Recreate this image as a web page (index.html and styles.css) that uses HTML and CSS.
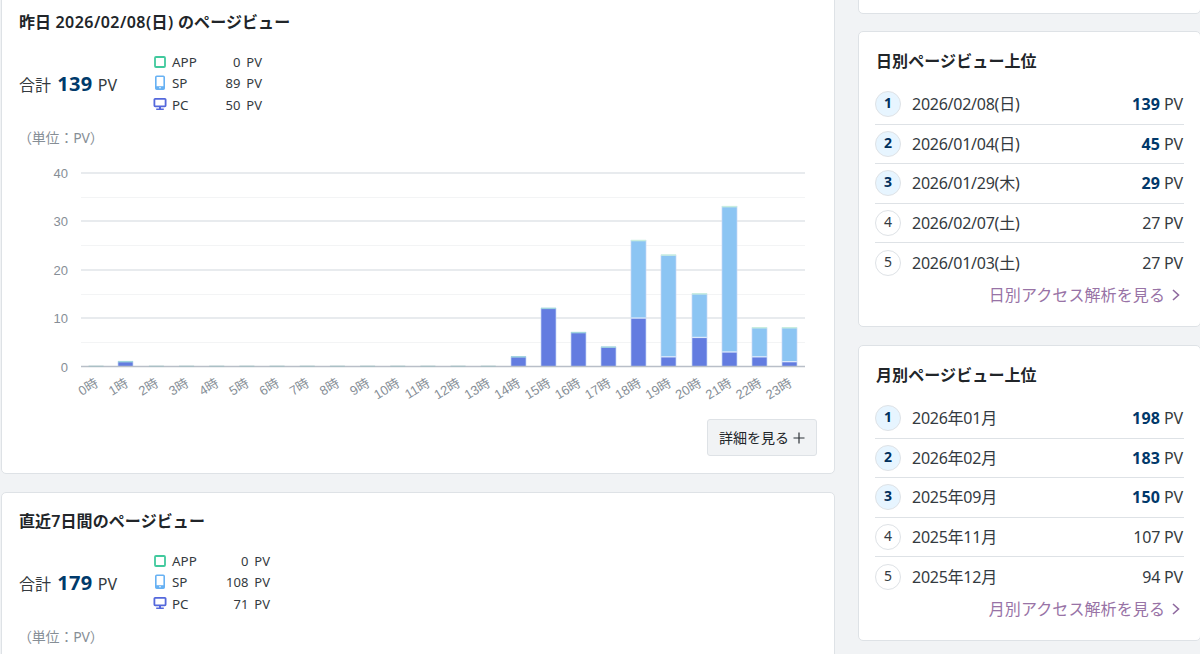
FILE: index.html
```html
<!DOCTYPE html>
<html lang="ja">
<head>
    <meta charset="UTF-8">
    <meta name="viewport" content="width=device-width, initial-scale=1.0">
    <title>アクセス解析</title>
    <link rel="stylesheet" href="styles.css">
</head>
<body>
    <!-- Device icons -->
    <svg class="icon-defs" width="0" height="0">
        <symbol id="icon-app" viewBox="0 0 14 16">
            <rect x="2" y="3" width="10" height="10" rx="1" fill="none" stroke="#41c99d" stroke-width="1.8"/>
        </symbol>
        <symbol id="icon-sp" viewBox="0 0 14 16">
            <rect x="2.8" y="1.3" width="8.4" height="13" rx="1" fill="none" stroke="#67b1f3" stroke-width="1.6"/>
            <path d="M2.8 11.2h8.4v3H2.8z" fill="#67b1f3"/>
            <circle cx="7" cy="12.7" r="0.8" fill="#fff"/>
        </symbol>
        <symbol id="icon-pc" viewBox="0 0 14 16">
            <rect x="1.4" y="2.8" width="11.2" height="7.6" rx="0.8" fill="none" stroke="#5468dc" stroke-width="1.8"/>
            <path d="M6 10.5h2v2h2.8v1.6h-7.6v-1.6H6z" fill="#5468dc"/>
        </symbol>
    </svg>

    <div class="page">
        <main class="main-column">
            <!-- Yesterday -->
            <section class="card">
                <h2 class="card-title">昨日 <span class="title-date">2026/02/08(日)</span> のページビュー</h2>
                <div class="summary">
                    <p class="total">合計 <strong>139</strong> PV</p>
                    <ul class="devices">
                        <li><svg><use href="#icon-app"/></svg><span class="device-name">APP</span><span class="device-count">0</span>PV</li>
                        <li><svg><use href="#icon-sp"/></svg><span class="device-name">SP</span><span class="device-count">89</span>PV</li>
                        <li><svg><use href="#icon-pc"/></svg><span class="device-name">PC</span><span class="device-count">50</span>PV</li>
                    </ul>
                </div>
                <p class="unit">（単位：PV）</p>
                <svg id="hourly-chart" class="chart" width="798" height="260" viewBox="19 150 798 260"></svg>
                <div class="card-footer">
                    <button type="button" class="more-button">詳細を見る
                        <svg width="12" height="12" viewBox="0 0 12 12"><path d="M6 0.5v11M0.5 6h11" stroke="#2d3338" stroke-width="1.2"/></svg>
                    </button>
                </div>
            </section>

            <!-- Last 7 days -->
            <section class="card">
                <h2 class="card-title">直近7日間のページビュー</h2>
                <div class="summary">
                    <p class="total">合計 <strong>179</strong> PV</p>
                    <ul class="devices devices-wide">
                        <li><svg><use href="#icon-app"/></svg><span class="device-name">APP</span><span class="device-count">0</span>PV</li>
                        <li><svg><use href="#icon-sp"/></svg><span class="device-name">SP</span><span class="device-count">108</span>PV</li>
                        <li><svg><use href="#icon-pc"/></svg><span class="device-name">PC</span><span class="device-count">71</span>PV</li>
                    </ul>
                </div>
                <p class="unit">（単位：PV）</p>
            </section>
        </main>

        <aside class="side-column">
            <section class="card card-blank"></section>

            <!-- Daily ranking -->
            <section class="card">
                <h2 class="card-title">日別ページビュー上位</h2>
                <ol class="ranking">
                    <li class="top"><span class="rank">1</span><span class="label">2026/02/08(日)</span><span class="count"><b>139</b> PV</span></li>
                    <li class="top"><span class="rank">2</span><span class="label">2026/01/04(日)</span><span class="count"><b>45</b> PV</span></li>
                    <li class="top"><span class="rank">3</span><span class="label">2026/01/29(木)</span><span class="count"><b>29</b> PV</span></li>
                    <li><span class="rank">4</span><span class="label">2026/02/07(土)</span><span class="count">27 PV</span></li>
                    <li><span class="rank">5</span><span class="label">2026/01/03(土)</span><span class="count">27 PV</span></li>
                </ol>
                <a class="more-link" href="#">日別アクセス解析を見る
                    <svg width="8" height="12" viewBox="0 0 8 12"><path d="M1 1l5.5 5L1 11" fill="none" stroke="#8f6a9f" stroke-width="1.6"/></svg>
                </a>
            </section>

            <!-- Monthly ranking -->
            <section class="card">
                <h2 class="card-title">月別ページビュー上位</h2>
                <ol class="ranking">
                    <li class="top"><span class="rank">1</span><span class="label">2026年01月</span><span class="count"><b>198</b> PV</span></li>
                    <li class="top"><span class="rank">2</span><span class="label">2026年02月</span><span class="count"><b>183</b> PV</span></li>
                    <li class="top"><span class="rank">3</span><span class="label">2025年09月</span><span class="count"><b>150</b> PV</span></li>
                    <li><span class="rank">4</span><span class="label">2025年11月</span><span class="count">107 PV</span></li>
                    <li><span class="rank">5</span><span class="label">2025年12月</span><span class="count">94 PV</span></li>
                </ol>
                <a class="more-link" href="#">月別アクセス解析を見る
                    <svg width="8" height="12" viewBox="0 0 8 12"><path d="M1 1l5.5 5L1 11" fill="none" stroke="#8f6a9f" stroke-width="1.6"/></svg>
                </a>
            </section>
        </aside>
    </div>

    <script src="chart.js"></script>
</body>
</html>
```

FILE: styles.css
```css
* {
    box-sizing: border-box;
}

body {
    margin: 0;
    background: #f1f3f5;
    color: #343a40;
    font-family: "Noto Sans", "Noto Sans CJK JP", sans-serif;
    font-size: 16px;
    line-height: 24px;
}

h2, p, ul, ol {
    margin: 0;
    padding: 0;
    list-style: none;
}

.icon-defs {
    display: block;
}

.page {
    display: flex;
    gap: 23px;
    width: 100%;
    height: 654px;
    padding-left: 1px;
    overflow: hidden;
}

.main-column {
    flex: 0 0 834px;
    margin-top: -7px;
}

.side-column {
    flex: 0 0 343px;
    margin-top: -26px;
}

.card {
    height: 296px;
    padding: 16px;
    margin-bottom: 18px;
    background: #fff;
    border: 1px solid #dee2e6;
    border-radius: 5px;
}

.main-column .card {
    height: 481px;
    padding-left: 17px;
}

.side-column .card-blank {
    height: 40px;
    padding: 0;
    margin-bottom: 17px;
}

.card-title {
    font-size: 16px;
    font-weight: 600;
    line-height: 24px;
    color: #212529;
    letter-spacing: 0.1px;
}

.title-date {
    letter-spacing: 0.45px;
}

.side-column .card-title {
    padding: 1px 0 0 1px;
}

/* Totals and devices */
.summary {
    display: flex;
    align-items: center;
    height: 64px;
    margin-top: 18px;
}

.total {
    width: 134px;
    white-space: nowrap;
}

.total strong {
    margin: 0 1px 0 2px;
    font-size: 20px;
    letter-spacing: 0.4px;
    color: #003a6b;
}

.devices {
    width: 109px;
    font-size: 13px;
}

.devices-wide {
    width: 117px;
}

.devices li {
    display: flex;
    align-items: center;
    height: 21.3px;
    line-height: 21px;
}

.devices svg {
    width: 14px;
    height: 16px;
    margin: 0 5px 2px 0;
}

.device-name {
    width: 30px;
    font-size: 13.4px;
}

.device-count {
    flex: 1;
    margin-right: 6px;
    text-align: right;
}

.unit {
    margin-top: 11px;
    margin-left: -1px;
    font-size: 14px;
    line-height: 22px;
    letter-spacing: -0.2px;
    color: #868e96;
}

.chart {
    display: block;
    margin-top: 1px;
}

.chart text {
    font-family: "Liberation Sans", "Noto Sans CJK JP", sans-serif;
    font-size: 13px;
    fill: #868e96;
    text-anchor: end;
}

.card-footer {
    display: flex;
    justify-content: flex-end;
    margin-top: 9px;
    padding-right: 1px;
}

.more-button {
    display: flex;
    align-items: center;
    justify-content: center;
    gap: 4px;
    width: 110px;
    height: 37px;
    padding: 0 0 2px;
    font-family: inherit;
    font-size: 14px;
    color: #212529;
    background: #f1f3f5;
    border: 1px solid #dee2e6;
    border-radius: 3px;
}

.more-button svg {
    margin-top: 2px;
}

/* Ranking lists */
.ranking {
    margin-top: 12px;
}

.ranking li {
    display: flex;
    align-items: center;
    height: 39.6px;
    border-bottom: 1px solid #dee2e6;
}

.ranking li:last-child {
    height: 38.6px;
    border-bottom: none;
}

.rank {
    width: 26px;
    height: 26px;
    border: 1px solid #dee2e6;
    border-radius: 50%;
    font-size: 14px;
    line-height: 21px;
    text-align: center;
}

.top .rank {
    background: #e7f5ff;
    color: #00305c;
    font-weight: 700;
}

.label {
    flex: 1;
    margin-left: 11px;
    letter-spacing: -0.25px;
}

.count {
    letter-spacing: -0.2px;
    margin-right: 1px;
}

.count b {
    letter-spacing: 0.2px;
    color: #00386a;
}

.more-link {
    display: flex;
    align-items: center;
    justify-content: flex-end;
    gap: 7px;
    margin-top: 1px;
    padding-right: 4px;
    letter-spacing: 0.1px;
    color: #9873a6;
    text-decoration: none;
}
```

FILE: chart.js
```javascript
var chart = document.getElementById("hourly-chart");
var plotLeft = 81, plotRight = 805, base = 366.5, unit = 4.845;
var step = (plotRight - plotLeft) / 24;

var pc = [0, 1, 0, 0, 0, 0, 0, 0, 0, 0, 0, 0, 0, 0, 2, 12, 7, 4, 10, 2, 6, 3, 2, 1];
var sp = [0, 0, 0, 0, 0, 0, 0, 0, 0, 0, 0, 0, 0, 0, 0, 0, 0, 0, 16, 21, 9, 30, 6, 7];

function add(name, attrs, text) {
    var el = document.createElementNS("http://www.w3.org/2000/svg", name);
    for (var key in attrs) {
        el.setAttribute(key, attrs[key]);
    }
    if (text) {
        el.textContent = text;
    }
    chart.appendChild(el);
}

function line(x1, x2, y, color, width) {
    add("path", { d: "M" + x1 + " " + y + "H" + x2, stroke: color, "stroke-width": width });
}

// grid lines and y axis labels
for (var v = 5; v <= 40; v += 5) {
    var gy = Math.round(base - v * unit);
    line(plotLeft, plotRight, v % 10 ? gy + 0.5 : gy, v % 10 ? "#f3f4f5" : "#e1e5e9", v % 10 ? 1 : 1.5);
}
for (v = 0; v <= 40; v += 10) {
    add("text", { x: 68, y: base - v * unit + 5 }, String(v));
}

// stacked bars
for (var i = 0; i < 24; i++) {
    var x = Math.floor(plotLeft + step * (i + 0.5) - 7.3);
    var pcTop = base - pc[i] * unit;
    var barTop = pcTop - sp[i] * unit;
    if (pc[i]) {
        add("rect", { x: x, y: pcTop, width: 15, height: base - pcTop, fill: "#637ce0" });
    }
    if (sp[i]) {
        add("rect", { x: x, y: barTop, width: 15, height: pcTop - barTop, fill: "#8cc5f3" });
        line(x, x + 15, pcTop, "#dbe9fb", 1.3);
    }
    if (pc[i]) {
        add("rect", { x: x, y: barTop, width: 15, height: base - barTop, fill: "none", stroke: "#c5d8f7", "stroke-width": 0.7 });
        line(x, x + 15, barTop, sp[i] ? "#c8eddf" : "#a0d4dd", 1.5);
    }
}

// baseline and x axis labels
line(plotLeft, plotRight, base, "#b9bfc8", 1.6);
for (i = 0; i < 24; i++) {
    x = plotLeft + step * (i + 0.5);
    if (!pc[i]) {
        line(x - 7.5, x + 7.5, base - 0.3, "#a4c0c4", 1);
    }
    add("text", { x: 0, y: 0, transform: "translate(" + (x + 3) + " 385.5) rotate(-31)" }, i + "時");
}
```
